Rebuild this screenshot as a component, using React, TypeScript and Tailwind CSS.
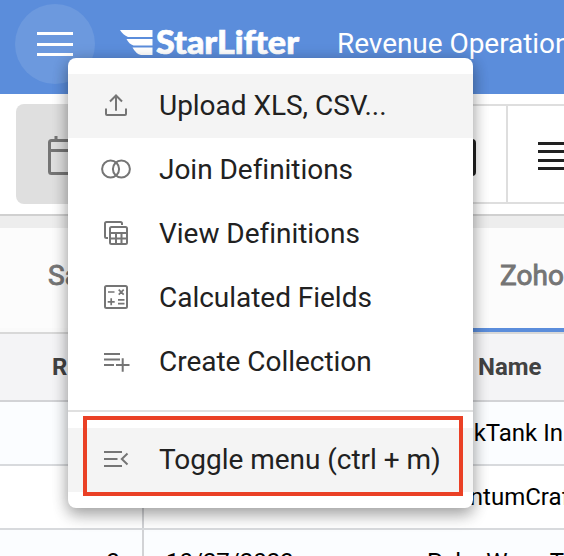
import type { ReactNode } from "react";

function Icon({ children }: { children: ReactNode }) {
  return (
    <svg width="32" height="32" viewBox="0 0 32 32" fill="none" stroke="#757575" strokeWidth="2" className="-mt-0.5 shrink-0">
      {children}
    </svg>
  );
}

const UploadIcon = () => (
  <Icon>
    <path d="M16 21.700V7M10 12.500l6-6 6 6M6 19.500V25q0 1 1 1h18q1 0 1-1v-5.500" />
  </Icon>
);
const JoinIcon = () => (
  <Icon>
    <circle cx="10.600" cy="16" r="8.500" />
    <circle cx="21.400" cy="16" r="8.500" />
  </Icon>
);
const ViewIcon = () => (
  <Icon>
    <path d="M8 21H6.500Q5 21 5 19.500V6.500Q5 5 6.500 5h14Q22 5 22 6.500V8" />
    <rect x="10" y="10" width="17" height="17" rx="1.500" />
    <path d="M10 16h17M10 21.500h17M16 16v11M21.500 16v11" />
  </Icon>
);
const CalcIcon = () => (
  <Icon>
    <rect x="5" y="5" width="22" height="22" rx="1.500" />
    <path d="M8 11h6.500M18.700 8.700l5 5M23.700 8.700l-5 5M11.200 17.300v7M7.700 20.800h7M18 18.900h6.500M18 22.700h6.500" strokeWidth="1.700" />
  </Icon>
);
const AddListIcon = () => (
  <Icon>
    <path d="M4 9h16M4 14.500h16M4 20h10M16 20h13.500M22.700 13.200v13.500" />
  </Icon>
);
const CollapseIcon = () => (
  <Icon>
    <path d="M4 9h18M4 16h13.500M4 23h18M27.500 10.500L21.800 16l5.700 5.500" />
  </Icon>
);

function MenuItem({ icon, active, children }: { icon: ReactNode; active?: boolean; children: ReactNode }) {
  return (
    <div className={`flex h-16 items-center pl-8 ${active ? "bg-[#f4f4f4]" : "bg-white"}`}>
      {icon}
      <span className="ml-[27px] whitespace-nowrap text-[28px] leading-none tracking-[-0.03px] text-[#212121]">{children}</span>
    </div>
  );
}

function Logo() {
  return (
    <svg width="182" height="40" viewBox="0 0 182 40" fill="#fff" className="ml-[25px] shrink-0">
      <path d="M0 6h32.500v7H8Q3 11 0 6Z" />
      <path d="M6.500 15h26v6.500H13.500Q9 20 6.500 15Z" />
      <path d="M12.500 23.500h20V31H21Q16 30 12.500 23.500Z" />
      <text x="36" y="30" fontFamily="Lato, sans-serif" fontWeight="900" fontSize="32" textLength="143" lengthAdjust="spacingAndGlyphs" stroke="#fff" strokeWidth="0.700">
        StarLifter
      </text>
    </svg>
  );
}

export default function App() {
  return (
    <div className="relative flex h-[556px] w-[564px] flex-col overflow-hidden bg-white font-[Roboto,sans-serif]">
      <header className="flex h-[94px] shrink-0 items-start bg-[#5b8ddb] pl-[15px] pt-1 text-white">
        <div className="flex size-20 shrink-0 items-center justify-center rounded-full bg-[#6c99de]">
          <div className="flex h-6 w-9 flex-col justify-between">
            <i className="h-[3px] bg-white" />
            <i className="h-[3px] bg-white" />
            <i className="h-[3px] bg-white" />
          </div>
        </div>
        <div className="flex h-20 items-center">
          <Logo />
          <span className="ml-[35px] whitespace-nowrap text-[28px] leading-none tracking-[-0.05px]">Revenue Operations</span>
        </div>
      </header>

      <div className="flex h-[122px] shrink-0 border-b-2 border-[#d0d0d0] bg-white pl-4 pt-[10px]">
        <div className="flex h-[100px] w-[100px] shrink-0 items-center rounded-l-lg bg-[#dfdfdf] pl-8">
          <svg width="36" height="42" viewBox="0 0 36 42" fill="none" stroke="#757575" strokeWidth="3">
            <rect x="1.500" y="7.500" width="33" height="33" rx="2" />
            <path d="M2 17.500h32M8 3v4M28 3v4" />
          </svg>
        </div>
        <div className="flex h-[100px] w-[392px] shrink-0 items-center justify-end border-y-2 border-r-2 border-[#dedede] pr-[30px] pt-[6px]">
          <div className="h-[37px] w-9 rounded border-4 border-[#212121]" />
        </div>
        <div className="flex h-[100px] grow items-center border-y-2 border-[#dedede] pl-[30px] pt-[4px]">
          <div className="flex h-7 w-9 shrink-0 flex-col justify-between">
            <i className="h-[3px] bg-[#212121]" />
            <i className="h-[3px] bg-[#212121]" />
            <i className="h-[3px] bg-[#212121]" />
            <i className="h-[3px] bg-[#212121]" />
          </div>
        </div>
      </div>

      <div className="h-3 shrink-0 bg-[#ededed]" />

      <div className="flex h-[106px] shrink-0 border-b-2 border-[#d8d8d8] bg-[#fcfcfc] text-[28px] leading-none text-[#757575] [-webkit-text-stroke:0.9px_#757575]">
        <div className="h-full w-[420px] shrink-0 border-b-4 border-[#fafafa] pl-12 pt-[34px]">Sales</div>
        <div className="h-full grow border-b-4 border-[#5b8ddb] pl-20 pt-[34px]">Zoho</div>
      </div>

      <div className="flex h-[68px] shrink-0 items-center border-b-2 border-[#d2d3d6] bg-[#f4f4f6] text-[24px] font-bold text-[#424242]">
        <div className="w-[142px] shrink-0 pl-[52px]">Row</div>
        <div className="w-[284px] shrink-0 pl-6">Date</div>
        <div className="whitespace-nowrap pl-[52px]">Name</div>
      </div>

      <div className="flex h-16 shrink-0 items-center border-b-2 border-[#d8dadd] bg-[#fbfdff] text-[24px] text-black">
        <div className="h-full w-[144px] shrink-0 border-r-2 border-[#d2d3d6]" />
        <div className="flex w-[420px] justify-end whitespace-nowrap pr-px">ThinkTank In</div>
      </div>
      <div className="flex h-16 shrink-0 items-center border-b-2 border-[#d8dadd] bg-white text-[24px] text-black">
        <div className="h-full w-[144px] shrink-0 border-r-2 border-[#d2d3d6]" />
        <div className="w-[420px] whitespace-nowrap pl-[283px]">QuantumCraft</div>
      </div>
      <div className="flex h-16 shrink-0 items-center bg-[#fbfdff] text-[24px] text-black">
        <div className="flex h-full w-[144px] shrink-0 items-center justify-end border-r-2 border-[#d2d3d6] pr-[22px]">3</div>
        <div className="w-[283px] shrink-0 pl-[22px]">10/27/2023</div>
        <div className="whitespace-nowrap">PulseWave Tech</div>
      </div>

      <nav className="absolute left-[68px] top-[58px] h-[450px] w-[405px] rounded-lg bg-white py-4 shadow-[0_8px_16px_rgba(0,0,0,0.24),0_2px_16px_rgba(0,0,0,0.22)]">
        <MenuItem icon={<UploadIcon />} active>Upload XLS, CSV...</MenuItem>
        <MenuItem icon={<JoinIcon />}>Join Definitions</MenuItem>
        <MenuItem icon={<ViewIcon />}>View Definitions</MenuItem>
        <MenuItem icon={<CalcIcon />}>Calculated Fields</MenuItem>
        <MenuItem icon={<AddListIcon />}>Create Collection</MenuItem>
        <div className="mb-4 mt-4 h-0.5 bg-[#e0e0e0]" />
        <MenuItem icon={<CollapseIcon />} active>Toggle menu (ctrl + m)</MenuItem>
      </nav>
      <div className="absolute left-[83px] top-[416px] h-20 w-[380px] border-4 border-[#ea4025]" />
    </div>
  );
}
